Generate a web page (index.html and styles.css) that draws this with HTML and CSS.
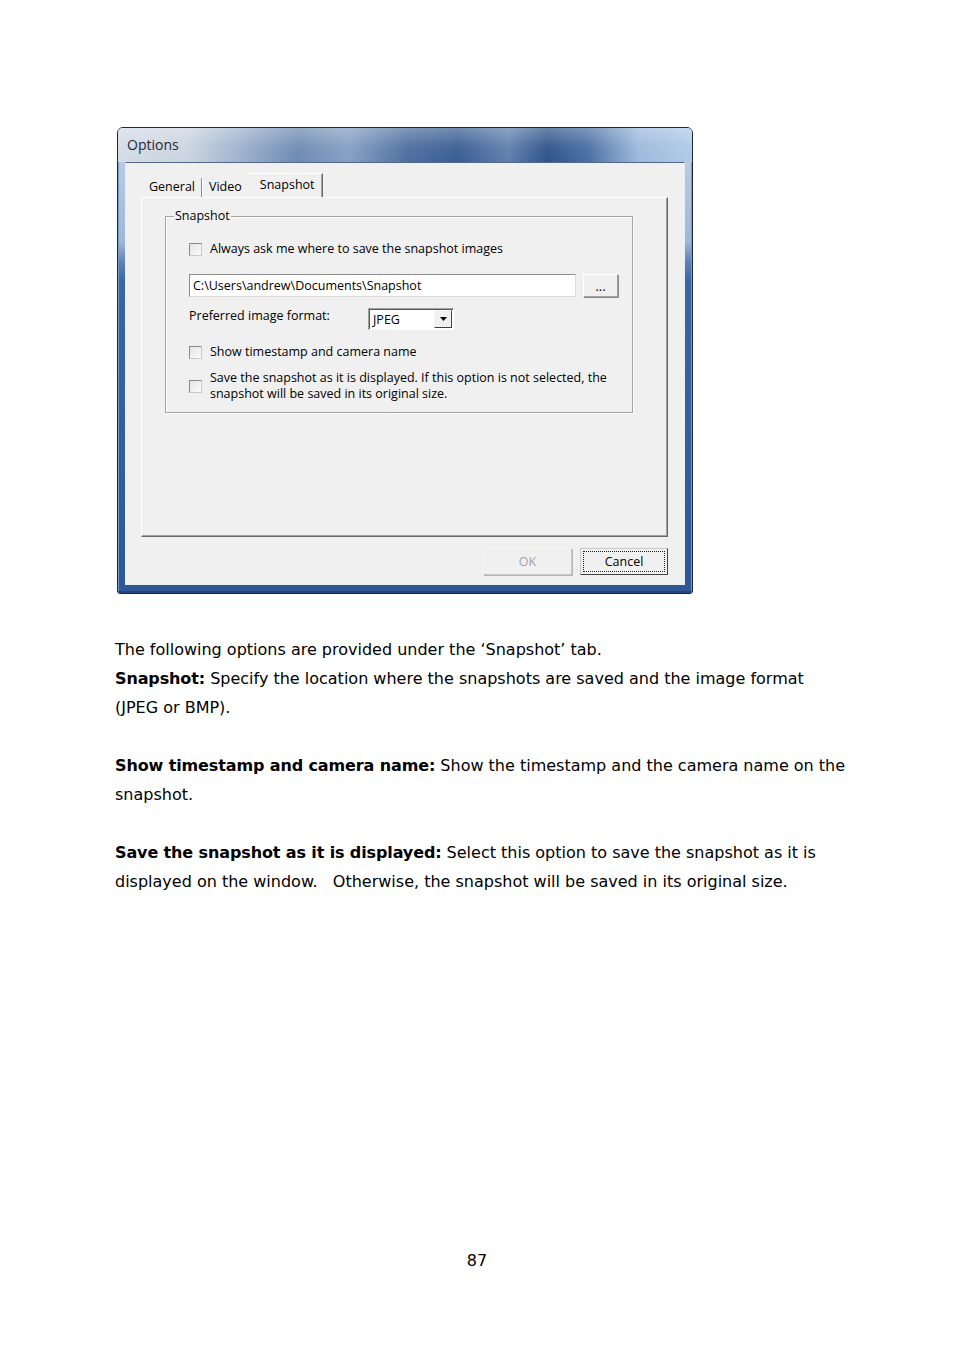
FILE: index.html
```html
<!DOCTYPE html>
<html>
<head>
<meta charset="utf-8">
<title>Options - Snapshot</title>
<link rel="stylesheet" href="styles.css">
</head>
<body>
<div class="page">
  <div class="window">
    <div class="titlebar"><span class="title">Options</span></div>
    <div class="frame">
      <div class="client">
        <div class="tabs">
          <span class="tab tab-general">General</span>
          <span class="tab-sep"></span>
          <span class="tab tab-video">Video</span>
          <span class="tab tab-active">Snapshot</span>
        </div>
        <div class="panel">
          <fieldset class="group">
            <legend class="group-legend">Snapshot</legend>
            <div class="check-row r1"><span class="checkbox"></span><span class="check-label">Always ask me where to save the snapshot images</span></div>
            <div class="path-row">
              <div class="textbox">C:\Users\andrew\Documents\Snapshot</div>
              <div class="btn btn-browse">...</div>
            </div>
            <div class="format-row">
              <span class="format-label">Preferred image format:</span>
              <div class="select">
                <span class="select-value">JPEG</span>
                <span class="select-btn"><svg width="7" height="4" viewBox="0 0 7 4"><path d="M0 0H7L3.5 4Z" fill="#000"/></svg></span>
              </div>
            </div>
            <div class="check-row r4"><span class="checkbox"></span><span class="check-label">Show timestamp and camera name</span></div>
            <div class="check-row r5"><span class="checkbox"></span><span class="check-label">Save the snapshot as it is displayed. If this option is not selected, the<br>snapshot will be saved in its original size.</span></div>
          </fieldset>
        </div>
        <div class="buttons">
          <div class="btn btn-ok">OK</div>
          <div class="btn btn-cancel"><span class="focus">Cancel</span></div>
        </div>
      </div>
    </div>
  </div>

  <div class="text">
    <p>The following options are provided under the ‘Snapshot’ tab.<br><b>Snapshot:</b> Specify the location where the snapshots are saved and the image format<br>(JPEG or BMP).</p>
    <p><b>Show timestamp and camera name:</b> Show the timestamp and the camera name on the<br>snapshot.</p>
    <p><b>Save the snapshot as it is displayed:</b> Select this option to save the snapshot as it is<br>displayed on the window.&nbsp;&nbsp; Otherwise, the snapshot will be saved in its original size.</p>
  </div>

  <div class="pagenum">87</div>
</div>
</body>
</html>
```

FILE: styles.css
```css
html, body {
  margin: 0;
  padding: 0;
  background: #ffffff;
}

.page {
  width: 954px;
  height: 1350px;
  padding-top: 127px;
  box-sizing: border-box;
  overflow: hidden;
}

/* ---------- window ---------- */
.window {
  margin-left: 117px;
  width: 576px;
  height: 467px;
  box-sizing: border-box;
  border: 1px solid #1d2637;
  border-radius: 6px 6px 3px 3px;
  overflow: hidden;
  display: flex;
  flex-direction: column;
  font-family: "Open Sans", "Noto Sans", sans-serif;
  font-size: 12.5px;
  color: #000;
}

.titlebar {
  height: 34px;
  flex: none;
  display: flex;
  align-items: center;
  padding-left: 9px;
  background:
    linear-gradient(to bottom, rgba(255,255,255,0.28) 0%, rgba(255,255,255,0.05) 55%, rgba(255,255,255,0) 100%),
    linear-gradient(to right, #d3dce7 0px, #cad4e0 70px, #9fb3cd 120px, #6d8ab2 180px, #86a0c3 230px, #4d6f9f 290px, #3a5e93 340px, #5f80ad 390px, #2f5489 430px, #4a6fa3 470px, #9cb9dc 520px, #b2cbe8 576px);
}

.title {
  font-size: 14px;
  color: #1f2836;
  line-height: 18px;
}

.frame {
  flex: 1;
  display: flex;
  padding: 0 7px 8px 7px;
  background: linear-gradient(to bottom, #b8cbe2 0px, #9fb7d7 80px, #5d82b6 100px, #3b64a0 120px, #2f5793 100%);
  box-shadow: inset 0 -2px 0 #24457a, inset 1px 0 0 #7a9bc8, inset -1px 0 0 #7a9bc8;
}

.client {
  flex: 1;
  box-sizing: border-box;
  background: #f0f0f0;
  border: 1px solid #e9eef4;
  border-top-color: #55688a;
  padding: 10px 16px 0 15px;
  display: flex;
  flex-direction: column;
}

/* ---------- tabs ---------- */
.tabs {
  height: 24px;
  display: flex;
  align-items: flex-end;
  padding-left: 2px;
}

.tab {
  height: 20px;
  line-height: 20px;
  padding: 0 6px;
  color: #000;
}

.tab-sep {
  width: 1px;
  height: 19px;
  background: #8f8f8f;
  box-shadow: 1px 0 0 #ffffff;
  margin-right: 1px;
}

.tab-video {
  padding-right: 6px;
}

.tab-active {
  height: 24px;
  line-height: 22px;
  padding: 0 7px 0 12px;
  box-sizing: border-box;
  border-top: 1px solid #ffffff;
  border-right: 1px solid #6a6a6a;
  box-shadow: inset -1px 0 0 #a0a0a0;
}

/* ---------- panel ---------- */
.panel {
  width: 527px;
  height: 340px;
  box-sizing: border-box;
  border-left: 1px solid #ffffff;
  border-top: 1px solid #ffffff;
  border-right: 1px solid #6a6a6a;
  border-bottom: 1px solid #6a6a6a;
  box-shadow: inset -1px -1px 0 #a0a0a0;
  background: #f0f0f0;
  padding: 10px 0 0 23px;
}

.group {
  margin: 0;
  width: 468px;
  min-width: 0;
  box-sizing: border-box;
  border: 1px solid #a3a3a3;
  box-shadow: inset 1px 1px 0 #ffffff, 1px 1px 0 #ffffff;
  padding: 17px 0 10px 23px;
}

.group-legend {
  margin-left: -15px;
  padding: 0 1px;
  line-height: 16px;
  font-size: 12.5px;
}

.check-row {
  display: flex;
  align-items: center;
  line-height: 16px;
}

.checkbox {
  width: 13px;
  height: 13px;
  box-sizing: border-box;
  flex: none;
  border: 1px solid #8a8a8a;
  border-right-color: #c9c9c9;
  border-bottom-color: #c9c9c9;
  background: linear-gradient(135deg, #e4e4e4, #fbfbfb);
  margin-right: 8px;
}

.r4 {
  margin-top: 14px;
}

.r5 {
  margin-top: 10px;
}

.path-row {
  margin-top: 17px;
  display: flex;
  gap: 7px;
}

.textbox {
  width: 387px;
  height: 23px;
  box-sizing: border-box;
  border: 1px solid #8c8c8c;
  border-right-color: #dcdcdc;
  border-bottom-color: #dcdcdc;
  background: #ffffff;
  padding-left: 3px;
  line-height: 21px;
  white-space: nowrap;
}

.btn {
  box-sizing: border-box;
  background: #f0f0f0;
  border: 1px solid;
  border-color: #ffffff #a0a0a0 #a0a0a0 #ffffff;
  box-shadow: 1px 1px 0 #8a8a8a;
  display: flex;
  align-items: center;
  justify-content: center;
}

.btn-browse {
  width: 35px;
  height: 23px;
  line-height: 16px;
  padding-top: 2px;
}

.format-row {
  margin-top: 11px;
  display: flex;
  align-items: flex-start;
}

.format-label {
  width: 179px;
  line-height: 15px;
}

.select {
  width: 86px;
  height: 22px;
  box-sizing: border-box;
  border: 1px solid #a0a0a0;
  border-right-color: #ffffff;
  border-bottom-color: #ffffff;
  box-shadow: inset 1px 1px 0 #5a5a5a;
  background: #ffffff;
  display: flex;
  align-items: stretch;
  padding: 1px;
}

.select-value {
  flex: 1;
  padding-left: 3px;
  line-height: 20px;
}

.select-btn {
  width: 18px;
  box-sizing: border-box;
  background: #f0f0f0;
  border: 1px solid;
  border-color: #f4f4f4 #404040 #404040 #f4f4f4;
  display: flex;
  align-items: center;
  justify-content: center;
}

/* ---------- bottom buttons ---------- */
.buttons {
  margin-top: 11px;
  width: 527px;
  display: flex;
  justify-content: flex-end;
  gap: 8px;
}

.btn-ok {
  width: 89px;
  height: 27px;
  color: #a3a3a3;
  border-color: #f6f6f6 #c8c8c8 #c8c8c8 #f6f6f6;
  box-shadow: 1px 1px 0 #b4b4b4;
}

.btn-cancel {
  width: 88px;
  height: 27px;
  border-color: #c8c8c8 #404040 #404040 #c8c8c8;
  box-shadow: none;
  padding: 2px;
}

.focus {
  flex: 1;
  align-self: stretch;
  display: flex;
  align-items: center;
  justify-content: center;
  border: 1px dotted #202020;
}

/* ---------- document text ---------- */
.text {
  margin: 41px 0 0 115px;
  font-family: "DejaVu Sans", Verdana, sans-serif;
  font-size: 16px;
  line-height: 29px;
  color: #000;
}

.text p {
  margin: 0 0 29px 0;
  white-space: nowrap;
}

.text b {
  font-weight: bold;
  letter-spacing: -0.12px;
}

.pagenum {
  margin-top: 350px;
  text-align: center;
  font-family: "DejaVu Sans", Verdana, sans-serif;
  font-size: 16px;
  line-height: 29px;
}
```
